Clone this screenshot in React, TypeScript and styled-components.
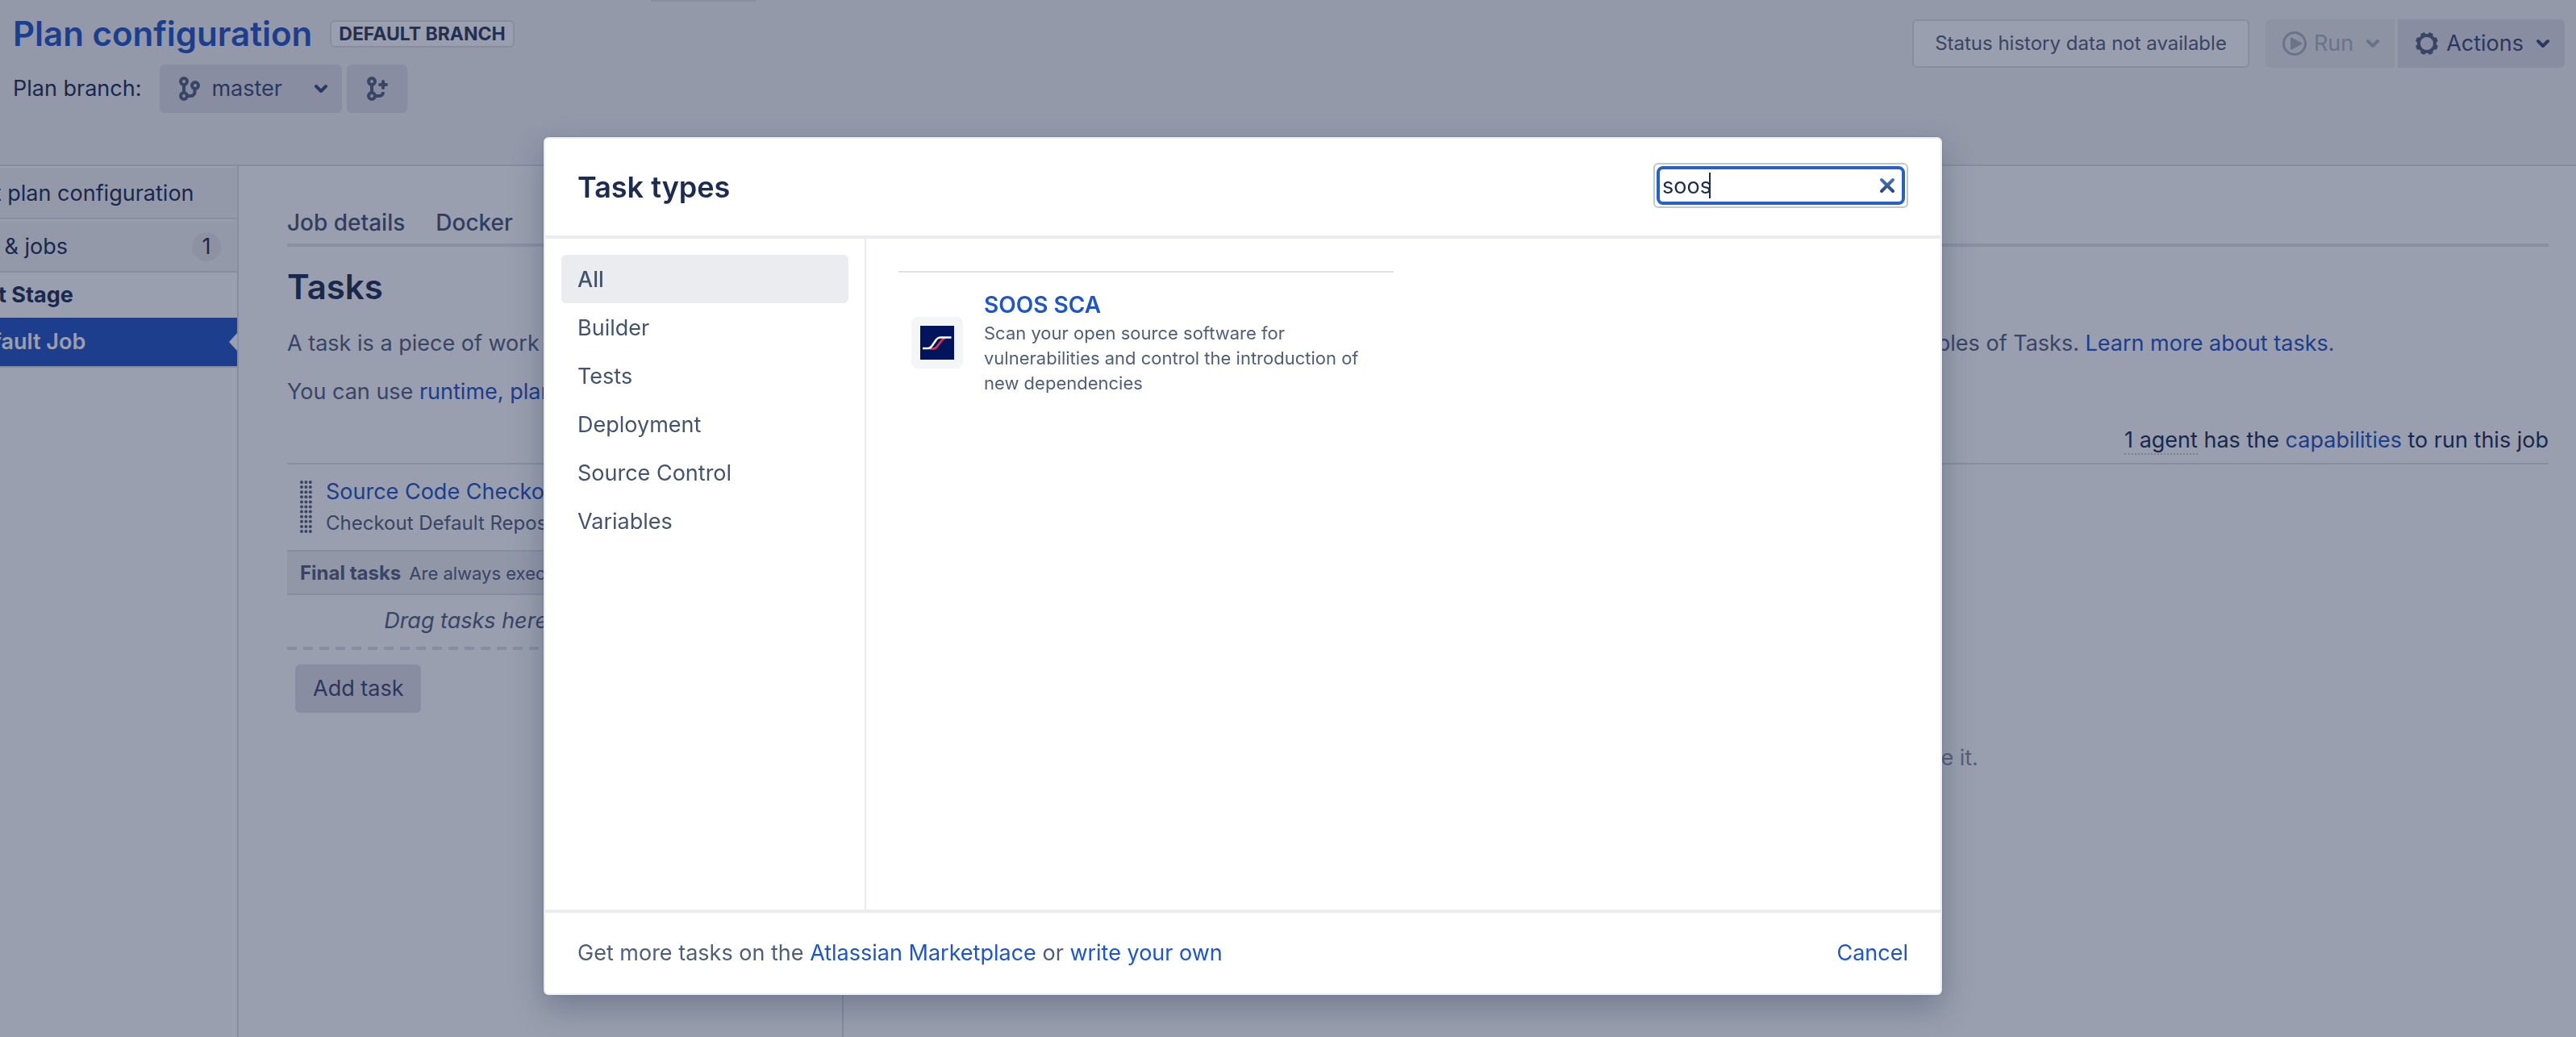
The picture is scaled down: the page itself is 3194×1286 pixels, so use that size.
import React, { useState } from 'react';
import styled, { createGlobalStyle } from 'styled-components';

const color = {
  text: '#253356',
  body: '#5a6480',
  button: '#424e74',
  link: '#2a56c6',
  border: '#dfe1e6',
  surface: '#f4f5f7',
  control: '#e4e1e8',
  dialogText: '#505f79',
  dialogLink: '#1d56cc',
  dialogBorder: '#ebecf0',
};

const GlobalStyle = createGlobalStyle`
  *, *::before, *::after { box-sizing: border-box; }
  body {
    margin: 0;
    background: #fff;
    color: ${color.text};
    font-family: Inter, "Liberation Sans", sans-serif;
    font-size: 27px;
    line-height: 40px;
  }
  button, input { font: inherit; }
  h1, h2, p, ul { margin: 0; padding: 0; }
  ul { list-style: none; }
`;

const Page = styled.div`
  display: flex;
  flex-direction: column;
  min-height: 100vh;
  overflow: hidden;
`;

const TopBar = styled.div`
  height: 2px;
  padding-left: 807px;
  background: ${color.surface};
`;

const TopBarTab = styled.div`
  width: 130px;
  height: 2px;
  background: ${color.border};
`;

const PageHeader = styled.header`
  display: flex;
  justify-content: space-between;
  align-items: flex-start;
  padding: 16px 14px 64px 16px;
  background: ${color.surface};
  border-bottom: 2px solid ${color.border};
`;

const TitleRow = styled.div`
  display: flex;
  align-items: center;
  gap: 22px;
  height: 48px;
  margin-bottom: 14px;
`;

const PageTitle = styled.h1`
  font-size: 42px;
  font-weight: 600;
  line-height: 48px;
`;

const Link = styled.a`
  color: ${color.link};
  text-decoration: none;
`;

const Lozenge = styled.span`
  height: 34px;
  padding: 0 9px;
  border: 2px solid ${color.border};
  border-radius: 6px;
  background: #fff;
  color: #35405f;
  font-size: 23px;
  font-weight: 700;
  line-height: 30px;
`;

const BranchRow = styled.div`
  display: flex;
  align-items: center;
  gap: 6px;
`;

const BranchLabel = styled.span`
  margin-right: 17px;
`;

const Button = styled.button<{ $join?: 'left' | 'right' }>`
  display: flex;
  align-items: center;
  height: 60px;
  padding: 0 22px;
  border: 0;
  border-radius: ${p => (p.$join === 'left' ? '6px 0 0 6px' : p.$join === 'right' ? '0 6px 6px 0' : '6px')};
  background: ${color.control};
  color: ${color.button};
  white-space: nowrap;

  &:disabled {
    background: #ecebee;
    color: #b0b3c0;
  }
`;

const BranchButton = styled(Button)`
  width: 226px;
  padding: 0 17px 0 22px;
  gap: 14px;

  svg:last-child { margin-left: auto; }
`;

const MenuButton = styled(Button)`
  padding: 0 18px 0 20px;
  gap: 8px;

  svg:last-child { margin-left: 7px; }
`;

const HeaderActions = styled.div`
  display: flex;
  gap: 20px;
  padding-top: 6px;
`;

const ButtonGroup = styled.div`
  display: flex;
  gap: 4px;
`;

const StatusBox = styled.div`
  height: 60px;
  padding: 0 26px;
  border: 2px solid ${color.border};
  border-radius: 6px;
  background: #fff;
  color: ${color.body};
  font-size: 24px;
  line-height: 56px;
  white-space: nowrap;
`;

const Columns = styled.div`
  display: flex;
  flex: 1;
`;

/* The navigation is scrolled partly out of the window to the left. */
const Sidebar = styled.nav`
  flex: none;
  width: 408px;
  margin-left: -112px;
  border-right: 2px solid ${color.border};
`;

const SidebarRow = styled.a`
  display: flex;
  align-items: center;
  justify-content: space-between;
  height: 66px;
  padding: 4px 20px 0 22px;
  border-bottom: 2px solid ${color.border};
  box-shadow: inset 0 2px #fff;
  background: ${color.surface};
  color: ${color.text};
  text-decoration: none;
  white-space: nowrap;
`;

const CountBadge = styled.span`
  width: 36px;
  height: 36px;
  border-radius: 18px;
  background: #e8e8ea;
  line-height: 36px;
  text-align: center;
`;

const StageName = styled.div`
  padding: 0 24px;
  font-weight: 700;
  line-height: 56px;
`;

const ActiveJob = styled.a`
  display: flex;
  align-items: center;
  justify-content: space-between;
  height: 62px;
  padding-left: 68px;
  border-bottom: 2px solid ${color.border};
  background: ${color.link};
  color: #fff;
  font-weight: 600;
  text-decoration: none;
`;

const Main = styled.main`
  display: flex;
  flex: 1;
  flex-direction: column;
  min-width: 0;
  padding: 50px 34px 0 60px;
`;

const Tabs = styled.nav`
  display: flex;
  gap: 38px;
  padding-bottom: 6px;
  border-bottom: 4px solid #e6e3ea;
`;

const Tab = styled.a`
  color: #4c5878;
  font-size: 28px;
  font-weight: 500;
  text-decoration: none;
`;

const SectionTitle = styled.h2`
  margin: 26px 0;
  font-size: 42px;
  font-weight: 600;
  line-height: 48px;
`;

const Paragraph = styled.p`
  margin-bottom: 20px;
  color: ${color.body};
  white-space: nowrap;
`;

const AgentSummary = styled.p`
  margin-bottom: 8px;
  text-align: right;
`;

const AgentCount = styled.span`
  border-bottom: 2px dotted #c9ccd4;
`;

const TaskPanels = styled.div`
  display: flex;
  flex: 1;
  border-top: 2px solid ${color.border};
`;

const TaskList = styled.div`
  flex: none;
  width: 690px;
  border-right: 2px solid ${color.border};
`;

const TaskItem = styled.div`
  display: flex;
  gap: 17px;
  height: 108px;
  padding: 14px 16px;
  border-bottom: 2px solid ${color.border};
`;

const Handle = styled.svg`
  flex: none;
  margin-top: 6px;
  fill: ${color.body};
`;

const TaskDescription = styled.div`
  color: ${color.body};
  font-size: 24px;
  line-height: 38px;
`;

const FinalTasks = styled.div`
  display: flex;
  gap: 10px;
  height: 54px;
  padding: 0 16px;
  border-bottom: 2px solid ${color.border};
  background: #f1f1f3;
  color: ${color.body};
  font-size: 22px;
  line-height: 54px;
  white-space: nowrap;
`;

const FinalLabel = styled.strong`
  font-size: 24px;
`;

const DropZone = styled.div`
  padding-bottom: 4px;
  background: repeating-linear-gradient(90deg, ${color.border} 0 12px, transparent 12px 20px) left bottom / 100% 4px no-repeat;
  color: ${color.body};
  font-style: italic;
  line-height: 64px;
  text-align: center;
`;

const AddTask = styled(Button)`
  margin: 18px 10px;
`;

const EmptyPanel = styled.div`
  flex: 1;
  padding-top: 344px;
  color: #90939d;
  text-align: center;
`;

const Blanket = styled.div`
  position: fixed;
  inset: 0;
  display: flex;
  justify-content: center;
  align-items: flex-start;
  padding: 170px 112px 0 0;
  background: rgba(11, 27, 62, 0.42);
`;

const Dialog = styled.section`
  display: flex;
  flex-direction: column;
  width: 100%;
  max-width: 1734px;
  border: 2px solid ${color.dialogBorder};
  border-radius: 6px;
  background: #fff;
  box-shadow: 0 0 2px rgba(9, 30, 66, 0.3), 0 16px 40px rgba(9, 30, 66, 0.28);
`;

const DialogHeader = styled.header`
  display: flex;
  justify-content: space-between;
  padding: 30px 40px;
  border-bottom: 4px solid ${color.dialogBorder};
`;

const DialogTitle = styled.h2`
  color: #1c2b4f;
  font-size: 36px;
  font-weight: 600;
  line-height: 60px;
`;

const SearchBox = styled.div`
  position: relative;
  width: 316px;
  height: 56px;
  padding: 2px;
  border: 2px solid #c1c7d0;
  border-radius: 6px;
`;

const SearchInput = styled.input`
  width: 100%;
  height: 48px;
  padding: 0 48px 0 3px;
  border: 4px solid #2560cc;
  border-radius: 8px;
  outline: none;
  background: #fff;
  color: #1c2b4f;
`;

const Caret = styled.span`
  position: absolute;
  top: 10px;
  left: 67px;
  width: 2px;
  height: 32px;
  background: #1c2b4f;
`;

const ClearButton = styled.button`
  position: absolute;
  top: 16px;
  right: 14px;
  display: flex;
  padding: 0;
  border: 0;
  background: none;
`;

const DialogBody = styled.div`
  display: flex;
  min-height: 832px;
`;

const Categories = styled.ul`
  flex: none;
  width: 398px;
  padding: 20px;
  border-right: 2px solid ${color.dialogBorder};
`;

const Category = styled.button<{ $selected?: boolean }>`
  display: block;
  width: 100%;
  height: 60px;
  padding: 2px 20px 0;
  border: 0;
  border-radius: 6px;
  background: ${p => (p.$selected ? color.dialogBorder : 'none')};
  color: #44546f;
  font-weight: ${p => (p.$selected ? 500 : 400)};
  text-align: left;
`;

const Results = styled.ul`
  flex: 1;
  padding: 40px;
`;

const Result = styled.li`
  display: flex;
  align-items: center;
  gap: 26px;
  max-width: 614px;
  padding: 20px 16px;
  border-top: 2px solid #dfe1e6;
`;

const ResultIcon = styled.div`
  display: flex;
  flex: none;
  align-items: center;
  justify-content: center;
  width: 64px;
  height: 64px;
  border-radius: 8px;
  background: #f4f5f7;
`;

const ResultTitle = styled.a`
  display: block;
  color: ${color.dialogLink};
  font-size: 28px;
  font-weight: 600;
  text-decoration: none;
`;

const ResultText = styled.p`
  color: ${color.dialogText};
  font-size: 22px;
  line-height: 31px;
`;

const DialogFooter = styled.footer`
  display: flex;
  justify-content: space-between;
  padding: 30px 40px;
  border-top: 4px solid ${color.dialogBorder};
  color: ${color.dialogText};
`;

const DialogLink = styled.a`
  color: ${color.dialogLink};
  text-decoration: none;
`;

const CancelButton = styled.button`
  padding: 0;
  border: 0;
  background: none;
  color: ${color.dialogLink};
`;

const Chevron = () => (
  <svg width="18" height="12" viewBox="0 0 18 12" fill="none" stroke="currentColor" strokeWidth="4" strokeLinecap="round" strokeLinejoin="round">
    <path d="M3 3l6 6 6-6" />
  </svg>
);

const BranchIcon = () => (
  <svg width="28" height="32" viewBox="0 0 28 32" fill="none" stroke={color.body} strokeWidth="4">
    <circle cx="8" cy="7" r="4" />
    <circle cx="8" cy="25" r="4" />
    <circle cx="22" cy="12" r="4" />
    <path d="M8 11v10M12 25h4q5 0 5.500-5V16" />
  </svg>
);

const AddBranchIcon = () => (
  <svg width="31" height="32" viewBox="0 0 31 32" fill="none" stroke={color.body} strokeWidth="4">
    <circle cx="9" cy="7" r="4" />
    <circle cx="9" cy="25" r="4" />
    <path d="M9 11v10M13 25h5q5 0 5-5" />
    <path d="M23 7v8M19 11h8" strokeLinecap="round" />
  </svg>
);

const PlayIcon = () => (
  <svg width="32" height="32" viewBox="0 0 32 32">
    <circle cx="16" cy="16" r="13.500" fill="none" stroke="currentColor" strokeWidth="3" />
    <path d="M12 9.500v13l12-6.500z" fill="currentColor" stroke="currentColor" strokeWidth="2" strokeLinejoin="round" />
  </svg>
);

const GearIcon = () => (
  <svg width="32" height="32" viewBox="0 0 32 32" fill={color.body}>
    <circle cx="16" cy="16" r="10" fill="none" stroke={color.body} strokeWidth="4" />
    {[0, 1, 2, 3, 4, 5, 6, 7].map(i => (
      <path key={i} d="M12.500 6l1-4h5l1 4z" transform={`rotate(${22.5 + i * 45} 16 16)`} />
    ))}
  </svg>
);

const DragHandle = () => (
  <Handle width="15" height="66" viewBox="0 0 15 66">
    {Array.from({ length: 33 }, (_, i) => (
      <circle key={i} cx={2 + (i % 3) * 5.4} cy={2 + Math.floor(i / 3) * 6.1} r="2" />
    ))}
  </Handle>
);

const Notch = () => (
  <svg width="10" height="22" viewBox="0 0 10 22" fill="#fff">
    <path d="M10 0v22L0 11z" />
  </svg>
);

const SoosLogo = () => (
  <svg width="42" height="42" viewBox="0 0 42 42" fill="none" strokeWidth="2.500">
    <path fill="#03145f" d="M0 0h42v42H0z" />
    <path stroke="#e2334f" d="M12 28.500h4q3 0 5-3l5.500-7q1.500-2.500 4-3" />
    <path stroke="#fff" d="M3 28h6.500q3 0 5-3l5.500-8q2-2.500 5-2.500h13.500" />
  </svg>
);

const ClearIcon = () => (
  <svg width="20" height="20" viewBox="0 0 20 20" stroke="url(#clear-shade)" strokeWidth="4">
    <defs>
      <linearGradient id="clear-shade" x1="0" y1="0" x2="0" y2="20" gradientUnits="userSpaceOnUse">
        <stop offset="0" stopColor="#4c7cc4" />
        <stop offset="1" stopColor="#2a3f73" />
      </linearGradient>
    </defs>
    <path d="M3 3l14 14M17 3L3 17" strokeLinecap="round" />
  </svg>
);

const categories = ['All', 'Builder', 'Tests', 'Deployment', 'Source Control', 'Variables'];

export default function App() {
  const [query, setQuery] = useState('soos');
  const [category, setCategory] = useState('All');

  return (
    <>
      <GlobalStyle />
      <Page>
        <TopBar>
          <TopBarTab />
        </TopBar>
        <PageHeader>
          <div>
            <TitleRow>
              <PageTitle>
                <Link href="#plan">Plan configuration</Link>
              </PageTitle>
              <Lozenge>DEFAULT BRANCH</Lozenge>
            </TitleRow>
            <BranchRow>
              <BranchLabel id="branch-label">Plan branch:</BranchLabel>
              <BranchButton type="button" aria-describedby="branch-label" aria-haspopup="menu">
                <BranchIcon />
                master
                <Chevron />
              </BranchButton>
              <Button type="button" aria-label="Create plan branch">
                <AddBranchIcon />
              </Button>
            </BranchRow>
          </div>
          <HeaderActions>
            <StatusBox>Status history data not available</StatusBox>
            <ButtonGroup>
              <MenuButton type="button" $join="left" disabled>
                <PlayIcon />
                Run
                <Chevron />
              </MenuButton>
              <MenuButton type="button" $join="right">
                <GearIcon />
                Actions
                <Chevron />
              </MenuButton>
            </ButtonGroup>
          </HeaderActions>
        </PageHeader>

        <Columns>
          <Sidebar>
            <SidebarRow href="#configuration">Default plan configuration</SidebarRow>
            <SidebarRow href="#jobs">
              Stages &amp; jobs
              <CountBadge>1</CountBadge>
            </SidebarRow>
            <StageName>Default Stage</StageName>
            <ActiveJob href="#job">
              Default Job
              <Notch />
            </ActiveJob>
          </Sidebar>

          <Main>
            <Tabs>
              <Tab href="#details">Job details</Tab>
              <Tab href="#docker">Docker</Tab>
            </Tabs>
            <SectionTitle>Tasks</SectionTitle>
            <Paragraph>
              A task is a piece of work that is being executed as part of the build. The execution of a script, a shell
              command, an Ant task or a Maven goal are only a few examples of Tasks.{' '}
              <Link href="#learn">Learn more about tasks</Link>.
            </Paragraph>
            <Paragraph>
              You can use <Link href="#variables">runtime, plan, project and global variables</Link> to parameterize
              your tasks.
            </Paragraph>
            <AgentSummary>
              <AgentCount>1 agent</AgentCount> has the <Link href="#capabilities">capabilities</Link> to run this job
            </AgentSummary>
            <TaskPanels>
              <TaskList>
                <TaskItem>
                  <DragHandle />
                  <div>
                    <Link href="#checkout">Source Code Checkout</Link>
                    <TaskDescription>Checkout Default Repository</TaskDescription>
                  </div>
                </TaskItem>
                <FinalTasks>
                  <FinalLabel>Final tasks</FinalLabel>
                  Are always executed even if a previous task fails
                </FinalTasks>
                <DropZone>Drag tasks here to make them final</DropZone>
                <AddTask type="button">Add task</AddTask>
              </TaskList>
              <EmptyPanel>Choose any task from the list on the left to configure it.</EmptyPanel>
            </TaskPanels>
          </Main>
        </Columns>
      </Page>

      <Blanket>
        <Dialog role="dialog" aria-labelledby="dialog-title">
          <DialogHeader>
            <DialogTitle id="dialog-title">Task types</DialogTitle>
            <SearchBox>
              <SearchInput
                type="text"
                aria-label="Search task types"
                value={query}
                onChange={e => setQuery(e.target.value)}
              />
              {query === 'soos' && <Caret />}
              <ClearButton type="button" aria-label="Clear search" onClick={() => setQuery('')}>
                <ClearIcon />
              </ClearButton>
            </SearchBox>
          </DialogHeader>
          <DialogBody>
            <Categories>
              {categories.map(name => (
                <li key={name}>
                  <Category type="button" $selected={name === category} onClick={() => setCategory(name)}>
                    {name}
                  </Category>
                </li>
              ))}
            </Categories>
            <Results>
              <Result>
                <ResultIcon>
                  <SoosLogo />
                </ResultIcon>
                <div>
                  <ResultTitle href="#soos">SOOS SCA</ResultTitle>
                  <ResultText>
                    Scan your open source software for vulnerabilities and control the introduction of new dependencies
                  </ResultText>
                </div>
              </Result>
            </Results>
          </DialogBody>
          <DialogFooter>
            <p>
              Get more tasks on the <DialogLink href="#marketplace">Atlassian Marketplace</DialogLink> or{' '}
              <DialogLink href="#write">write your own</DialogLink>
            </p>
            <CancelButton type="button">Cancel</CancelButton>
          </DialogFooter>
        </Dialog>
      </Blanket>
    </>
  );
}
